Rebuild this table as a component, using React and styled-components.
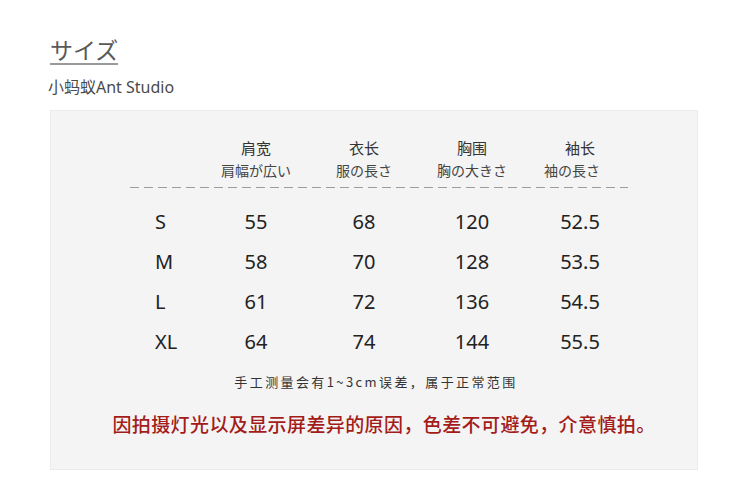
import React from "react";
import styled, { createGlobalStyle } from "styled-components";

const GlobalStyle = createGlobalStyle`
  body {
    margin: 0;
    background: #fff;
    font-family: "Noto Sans", "Noto Sans CJK SC", sans-serif;
  }
`;

const headers = [
  { cn: "肩宽", jp: "肩幅が広い" },
  { cn: "衣长", jp: "服の長さ" },
  { cn: "胸围", jp: "胸の大きさ" },
  { cn: "袖长", jp: "袖の長さ", shift: -8 },
];

const rows = [
  ["S", "55", "68", "120", "52.5"],
  ["M", "58", "70", "128", "53.5"],
  ["L", "61", "72", "136", "54.5"],
  ["XL", "64", "74", "144", "55.5"],
];

const App = () => {
  return (
    <Page>
      <GlobalStyle />
      <Title>サイズ</Title>
      <Brand>小蚂蚁Ant Studio</Brand>
      <Panel>
        <Grid>
          <span />
          {headers.map((h) => (
            <HeadCell key={h.cn}>
              <HeadTop>{h.cn}</HeadTop>
              <HeadSub $shift={h.shift || 0}>{h.jp}</HeadSub>
            </HeadCell>
          ))}
        </Grid>
        <Dashes />
        <Body>
          {rows.map((r) => (
            <Grid key={r[0]}>
              <SizeCell>{r[0]}</SizeCell>
              {r.slice(1).map((v, i) => (
                <ValueCell key={i}>{v}</ValueCell>
              ))}
            </Grid>
          ))}
        </Body>
        <Note>手工测量会有1~3cm误差，属于正常范围</Note>
        <Warning>因拍摄灯光以及显示屏差异的原因，色差不可避免，介意慎拍。</Warning>
      </Panel>
    </Page>
  );
};

const Page = styled.div`
  padding: 36px 0 0 50px;
  display: flex;
  flex-direction: column;
  align-items: flex-start;
`;

const Title = styled.div`
  font-family: "Noto Sans CJK JP", sans-serif;
  font-size: 23px;
  line-height: 26px;
  font-weight: 400;
  color: #5a5a5a;
  padding-bottom: 1px;
  border-bottom: 2px solid #9a9a9a;
`;

const Brand = styled.div`
  margin: 12px 0 0 -2px;
  font-family: "Noto Sans", "Noto Sans CJK SC", sans-serif;
  font-size: 16px;
  line-height: 20px;
  color: #4a4a4a;
`;

const Panel = styled.div`
  margin-top: 13px;
  width: 648px;
  height: 360px;
  box-sizing: border-box;
  background: #f4f4f4;
  border: 1px solid #ececec;
  display: flex;
  flex-direction: column;
  align-items: stretch;
  padding-top: 27px;
`;

const Grid = styled.div`
  display: grid;
  grid-template-columns: 49px repeat(4, 108px);
  padding-left: 102px;
`;

const HeadCell = styled.div`
  display: flex;
  flex-direction: column;
  align-items: center;
  font-family: "Noto Sans CJK SC", sans-serif;
`;

const HeadTop = styled.div`
  font-size: 15px;
  line-height: 20px;
  color: #333;
`;

const HeadSub = styled.div`
  margin-top: 3px;
  font-family: "Noto Sans CJK JP", sans-serif;
  font-size: 14px;
  line-height: 18px;
  color: #444;
  transform: translateX(${(p) => p.$shift}px);
`;

const Dashes = styled.div`
  margin: 8px 0 0 79px;
  width: 498px;
  height: 1px;
  background: repeating-linear-gradient(
    to right,
    #9c9c9c 0 9px,
    transparent 9px 14px
  );
`;

const Body = styled.div`
  margin-top: 14px;
  display: flex;
  flex-direction: column;
`;

const SizeCell = styled.div`
  font-size: 20px;
  line-height: 40px;
  color: #222;
  padding-left: 2px;
`;

const ValueCell = styled(SizeCell)`
  text-align: center;
  padding-left: 0;
`;

const Note = styled.div`
  margin-top: 11px;
  text-align: center;
  padding-left: 4px;
  font-family: "Noto Sans CJK SC", sans-serif;
  font-size: 13px;
  line-height: 18px;
  letter-spacing: 2.4px;
  color: #333;
`;

const Warning = styled.div`
  margin-top: 20px;
  text-align: center;
  padding-left: 20px;
  font-family: "Noto Sans CJK SC", sans-serif;
  font-size: 19px;
  font-weight: 500;
  line-height: 26px;
  letter-spacing: 0.4px;
  color: #a41c1a;
`;

export default App;
